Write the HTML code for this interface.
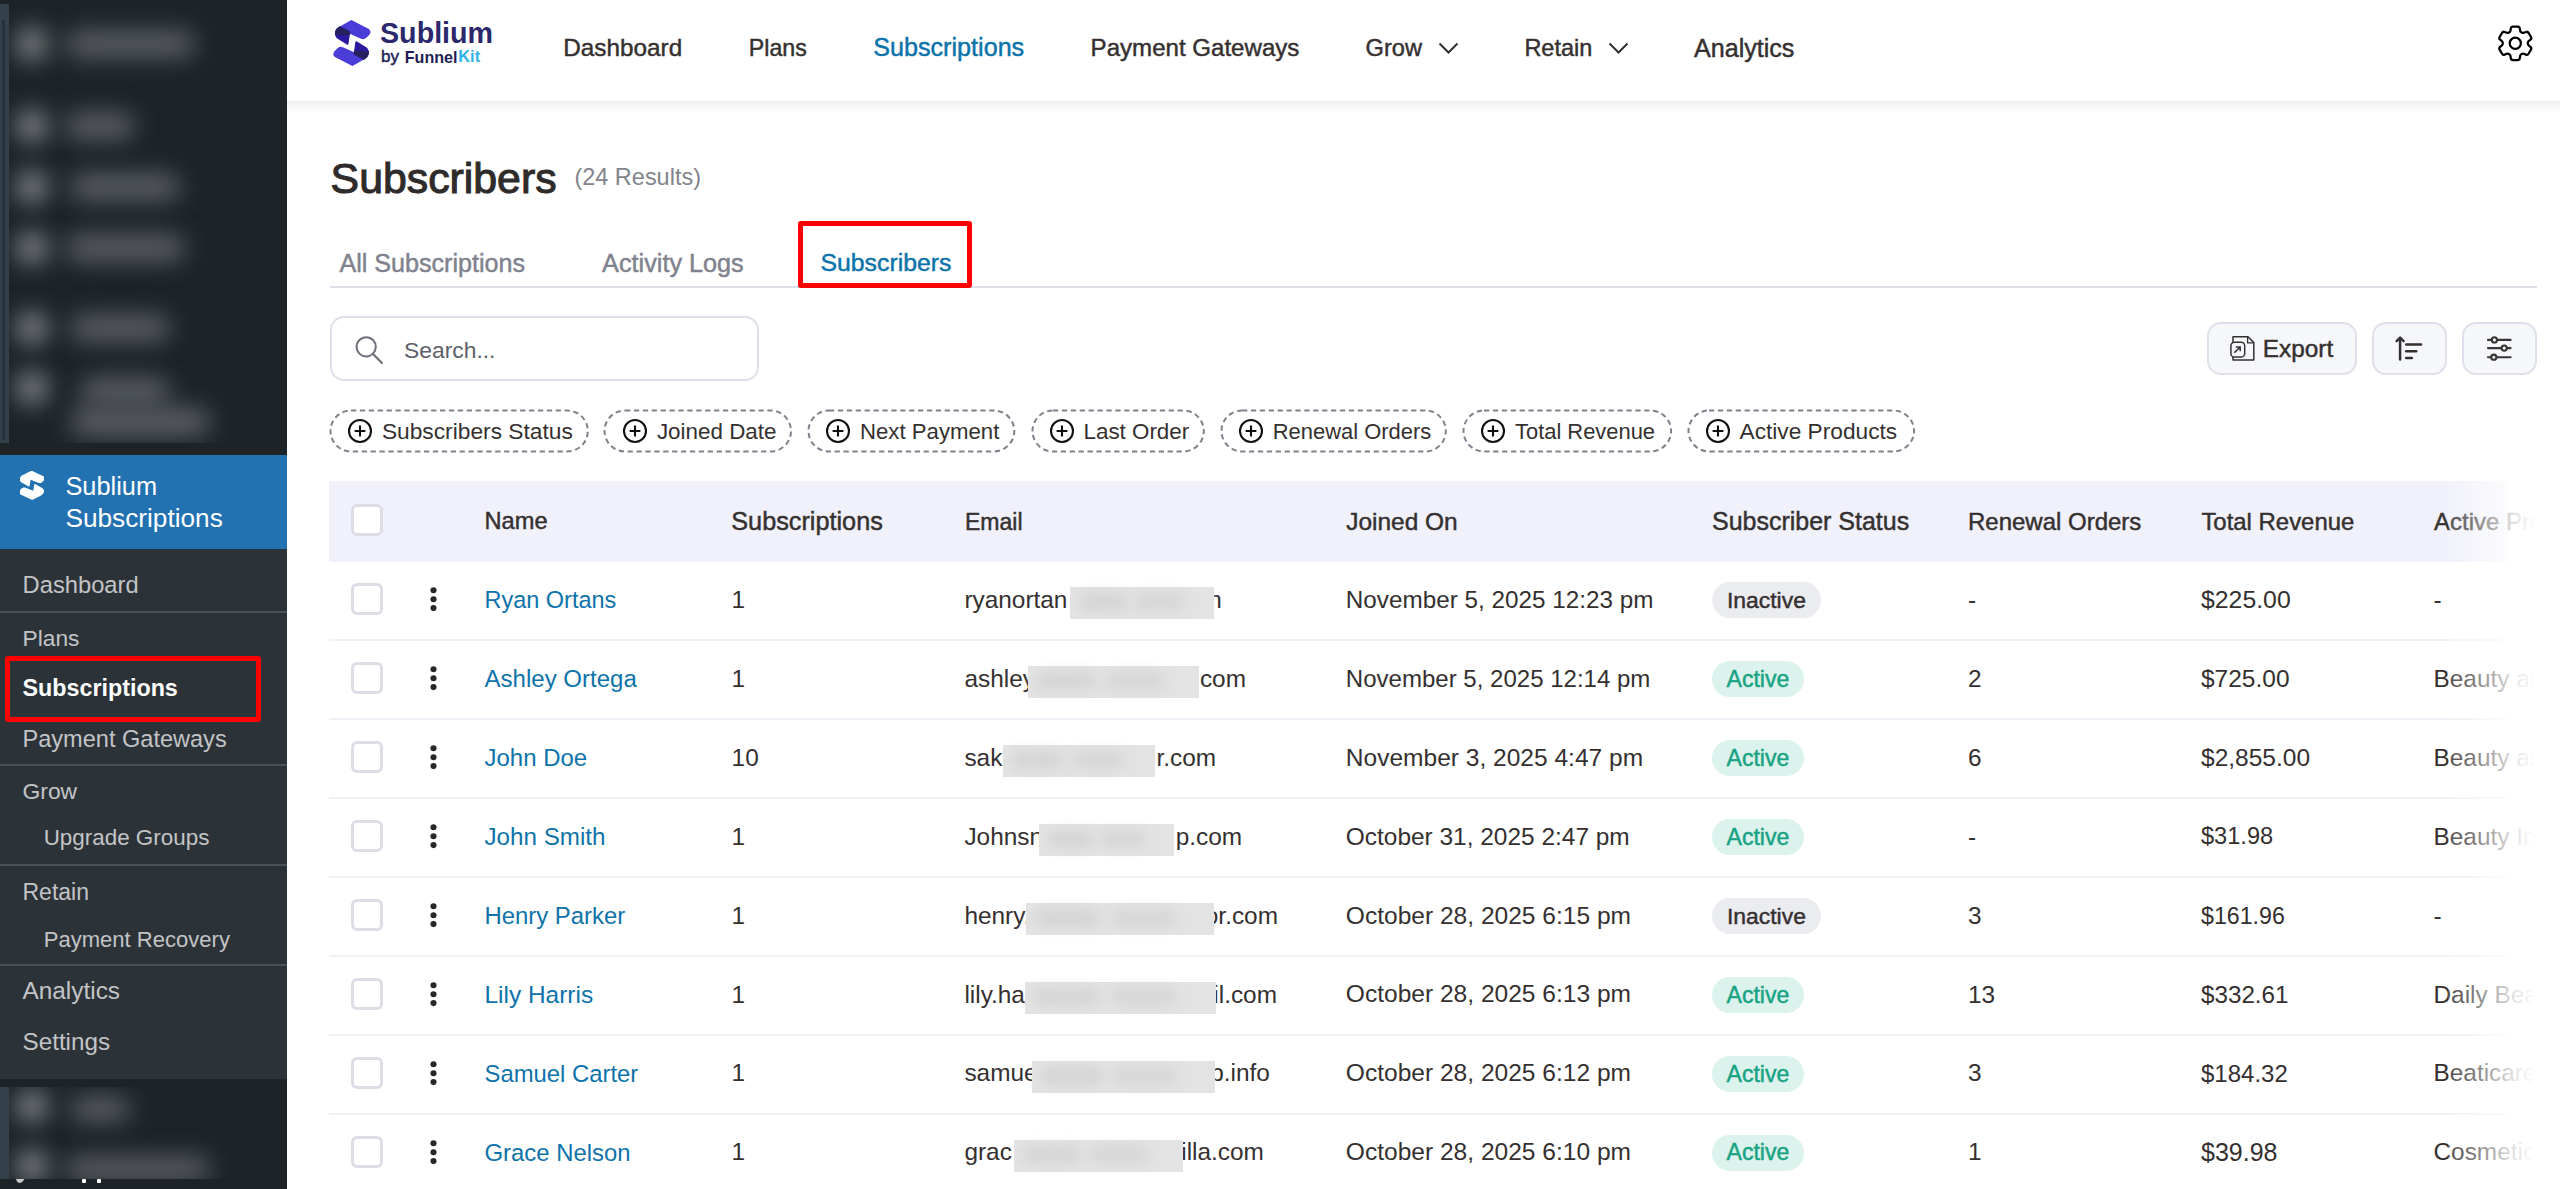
<!DOCTYPE html>
<html><head><meta charset="utf-8"><title>Subscribers</title>
<style>
html,body{margin:0;padding:0;width:2560px;height:1189px;overflow:hidden;background:#fff;}
body{position:relative;font-family:"Liberation Sans",sans-serif;}
.b{position:absolute;display:block;}
.t{position:absolute;white-space:nowrap;}
</style></head><body>
<div class="b" style="left:0px;top:0px;width:287px;height:1189px;background:#1d2327;"></div>
<div class="b" style="left:0;top:4px;width:287px;height:439px;overflow:hidden;">
<div class="b" style="left:16px;top:24px;width:32px;height:32px;background:#5d6166;filter:blur(12px);border-radius:20px;background:#84888c;"></div>
<div class="b" style="left:65px;top:27px;width:130px;height:26px;background:#5d6166;filter:blur(12px);border-radius:20px;"></div>
<div class="b" style="left:16px;top:106px;width:32px;height:32px;background:#5d6166;filter:blur(12px);border-radius:20px;background:#84888c;"></div>
<div class="b" style="left:65px;top:109px;width:70px;height:26px;background:#5d6166;filter:blur(12px);border-radius:20px;"></div>
<div class="b" style="left:16px;top:167px;width:32px;height:32px;background:#5d6166;filter:blur(12px);border-radius:20px;background:#84888c;"></div>
<div class="b" style="left:70px;top:170px;width:110px;height:26px;background:#5d6166;filter:blur(12px);border-radius:20px;"></div>
<div class="b" style="left:16px;top:228px;width:32px;height:32px;background:#5d6166;filter:blur(12px);border-radius:20px;background:#84888c;"></div>
<div class="b" style="left:65px;top:231px;width:120px;height:26px;background:#5d6166;filter:blur(12px);border-radius:20px;"></div>
<div class="b" style="left:16px;top:308px;width:32px;height:32px;background:#5d6166;filter:blur(12px);border-radius:20px;background:#84888c;"></div>
<div class="b" style="left:70px;top:311px;width:100px;height:26px;background:#5d6166;filter:blur(12px);border-radius:20px;"></div>
<div class="b" style="left:16px;top:368px;width:32px;height:32px;background:#5d6166;filter:blur(12px);border-radius:20px;background:#84888c;"></div>
<div class="b" style="left:80px;top:374px;width:90px;height:26px;background:#5d6166;filter:blur(12px);border-radius:20px;"></div>
<div class="b" style="left:70px;top:404px;width:140px;height:28px;background:#5d6166;filter:blur(12px);border-radius:20px;"></div>
<div class="b" style="left:0px;top:0px;width:9px;height:439px;background:#33414b;"></div>
<div class="b" style="left:2px;top:16px;width:3px;height:420px;background:#26313a;"></div>
</div>
<div class="b" style="left:0px;top:455px;width:287px;height:94px;background:#2271b1;"></div>
<div class="b" style="left:0px;top:549px;width:287px;height:530px;background:#2c3338;"></div>
<div class="b" style="left:0;top:1087px;width:287px;height:92px;overflow:hidden;">
<div class="b" style="left:16px;top:3px;width:32px;height:32px;background:#5d6166;filter:blur(12px);border-radius:20px;background:#84888c;"></div>
<div class="b" style="left:70px;top:10px;width:60px;height:24px;background:#5d6166;filter:blur(12px);border-radius:20px;"></div>
<div class="b" style="left:16px;top:63px;width:32px;height:32px;background:#5d6166;filter:blur(12px);border-radius:20px;background:#84888c;"></div>
<div class="b" style="left:65px;top:70px;width:145px;height:24px;background:#5d6166;filter:blur(12px);border-radius:20px;"></div>
<div class="b" style="left:0px;top:0px;width:9px;height:92px;background:#33414b;"></div>
</div>
<svg class="b" style="left:15px;top:1178px;width:10px;height:6px" viewBox="0 0 10 6"><path d="M1 1 Q2 5 5 5 Q8 4 9.5 1 Z" fill="#c8cacd"/></svg>
<div class="b" style="left:82px;top:1179px;width:3.5px;height:4px;background:#fff;border-radius:1px;"></div>
<div class="b" style="left:97px;top:1179px;width:3.5px;height:4px;background:#fff;border-radius:1px;"></div>
<div class="b" style="left:0px;top:611px;width:287px;height:2px;background:#4a5055;"></div>
<div class="b" style="left:0px;top:764px;width:287px;height:2px;background:#4a5055;"></div>
<div class="b" style="left:0px;top:864px;width:287px;height:2px;background:#4a5055;"></div>
<div class="b" style="left:0px;top:964px;width:287px;height:2px;background:#4a5055;"></div>
<svg class="b" style="left:19.8px;top:471px;width:24.6px;height:28.6px" viewBox="5 4.3 35 45.4" preserveAspectRatio="none">
<g fill="#fff" stroke="#fff" stroke-width="2.6" stroke-linejoin="round">
<path d="M10 11.6 L21.4 5.2 L38.4 14 Q40.2 15.6 38.6 18 L35.6 21 Q33.6 22.6 31.4 21.8 L19 16.3 L17.4 27.6 L7.4 21.2 Q5.4 19 6 16.2 Q7 13 10 11.6 Z"/>
<path d="M33.8 42.4 L22.4 48.8 L5.4 40 Q3.6 38.4 5.2 36 L8.2 33 Q10.2 31.4 12.4 32.2 L24.8 37.7 L26.4 26.4 L36.4 32.8 Q38.4 35 37.8 37.8 Q36.8 41 33.8 42.4 Z"/>
</g></svg>
<div class="t " style="left:65.40px;top:473.72px;font-size:25.37px;line-height:25.37px;color:#fff;">Sublium</div>
<div class="t " style="left:65.40px;top:504.91px;font-size:26.22px;line-height:26.22px;color:#fff;">Subscriptions</div>
<div class="t " style="left:22.60px;top:574.42px;font-size:23.72px;line-height:23.72px;color:#c3c4c7;">Dashboard</div>
<div class="t " style="left:22.50px;top:627.23px;font-size:22.76px;line-height:22.76px;color:#c3c4c7;">Plans</div>
<div class="t " style="left:22.50px;top:676.57px;font-size:23.31px;line-height:23.31px;color:#fff;font-weight:700;">Subscriptions</div>
<div class="t " style="left:22.50px;top:727.86px;font-size:23.55px;line-height:23.55px;color:#c3c4c7;">Payment Gateways</div>
<div class="t " style="left:22.50px;top:780.04px;font-size:22.87px;line-height:22.87px;color:#c3c4c7;">Grow</div>
<div class="t " style="left:43.70px;top:827.33px;font-size:22.41px;line-height:22.41px;color:#c3c4c7;">Upgrade Groups</div>
<div class="t " style="left:22.50px;top:880.62px;font-size:23.01px;line-height:23.01px;color:#c3c4c7;">Retain</div>
<div class="t " style="left:43.70px;top:929.14px;font-size:22.05px;line-height:22.05px;color:#c3c4c7;">Payment Recovery</div>
<div class="t " style="left:22.50px;top:979.37px;font-size:24.38px;line-height:24.38px;color:#c3c4c7;">Analytics</div>
<div class="t " style="left:22.50px;top:1029.78px;font-size:24.24px;line-height:24.24px;color:#c3c4c7;">Settings</div>
<div class="b" style="left:5px;top:656px;width:256px;height:66px;border:5px solid #ff0000;box-sizing:border-box;border-radius:3px;"></div>
<div class="b" style="left:287px;top:0px;width:2273px;height:101px;background:#fff;"></div>
<div class="b" style="left:287px;top:101px;width:2273px;height:12px;background:linear-gradient(#efeff0,#f6f7f8 50%,#fff);"></div>
<svg class="b" style="left:330px;top:16px;width:46px;height:54px" viewBox="0 0 46 54">
<g stroke-linejoin="round" stroke-width="2.2">
<path fill="#4a3dd8" stroke="#4a3dd8" d="M10 11.6 L21.4 5.2 L38.4 14 Q40.2 15.6 38.6 18 L35.6 21 Q33.6 22.6 31.4 21.8 L19 16.3 Z"/>
<path fill="#2a1b9e" stroke="#2a1b9e" d="M10 11.6 L19 16.3 L17.4 27.6 L7.4 21.2 Q5.4 19 6 16.2 Q7 13 10 11.6 Z"/>
<path fill="#26215e" stroke="#26215e" d="M7.2 14 Q8.4 12.4 10 11.6 L19 16.3 L18.6 18.2 L6.2 17.6 Q6.4 15.4 7.2 14 Z"/>
<path fill="#4a3dd8" stroke="#4a3dd8" d="M33.8 42.4 L22.4 48.8 L5.4 40 Q3.6 38.4 5.2 36 L8.2 33 Q10.2 31.4 12.4 32.2 L24.8 37.7 Z"/>
<path fill="#2a1b9e" stroke="#2a1b9e" d="M33.8 42.4 L24.8 37.7 L26.4 26.4 L36.4 32.8 Q38.4 35 37.8 37.8 Q36.8 41 33.8 42.4 Z"/>
<path fill="#26215e" stroke="#26215e" d="M36.6 40 Q35.4 41.6 33.8 42.4 L24.8 37.7 L25.2 35.8 L37.6 36.4 Q37.4 38.6 36.6 40 Z"/>
</g></svg>
<div class="t " style="left:380.00px;top:18.62px;font-size:28.68px;line-height:28.68px;color:#2b286c;font-weight:700;">Sublium</div>
<div class="t " style="left:381.00px;top:47.71px;font-size:17.00px;line-height:17.00px;color:#232158;-webkit-text-stroke:0.5px #232158;">by</div>
<div class="t " style="left:404.80px;top:48.50px;font-size:16.07px;line-height:16.07px;color:#1f1c55;font-weight:700;">Funnel</div>
<div class="t " style="left:458.30px;top:48.23px;font-size:16.39px;line-height:16.39px;color:#2fb4e6;font-weight:700;">Kit</div>
<div class="t " style="left:563.30px;top:36.17px;font-size:24.31px;line-height:24.31px;color:#353030;-webkit-text-stroke:0.45px #353030;">Dashboard</div>
<div class="t " style="left:748.80px;top:37.11px;font-size:23.20px;line-height:23.20px;color:#353030;-webkit-text-stroke:0.45px #353030;">Plans</div>
<div class="t " style="left:873.20px;top:35.45px;font-size:25.17px;line-height:25.17px;color:#0b73aa;-webkit-text-stroke:0.45px #0b73aa;">Subscriptions</div>
<div class="t " style="left:1090.60px;top:36.35px;font-size:24.09px;line-height:24.09px;color:#353030;-webkit-text-stroke:0.45px #353030;">Payment Gateways</div>
<div class="t " style="left:1365.60px;top:36.79px;font-size:23.58px;line-height:23.58px;color:#353030;-webkit-text-stroke:0.45px #353030;">Grow</div>
<div class="t " style="left:1524.40px;top:36.86px;font-size:23.49px;line-height:23.49px;color:#353030;-webkit-text-stroke:0.45px #353030;">Retain</div>
<div class="t " style="left:1694.00px;top:35.50px;font-size:25.10px;line-height:25.10px;color:#353030;-webkit-text-stroke:0.45px #353030;">Analytics</div>
<svg class="b" style="left:1437.6px;top:42px;width:21px;height:13px" viewBox="0 0 21 13"><path d="M1.5 1.5 L10.5 10.5 L19.5 1.5" fill="none" stroke="#353030" stroke-width="2"/></svg>
<svg class="b" style="left:1607.75px;top:42px;width:21px;height:13px" viewBox="0 0 21 13"><path d="M1.5 1.5 L10.5 10.5 L19.5 1.5" fill="none" stroke="#353030" stroke-width="2"/></svg>
<svg class="b" style="left:2493.1px;top:20.7px;width:44.6px;height:44.6px" viewBox="0 0 24 24" fill="none" stroke="#000" stroke-width="1.2" stroke-linecap="round" stroke-linejoin="round">
<path d="M9.594 3.94c.09-.542.56-.94 1.11-.94h2.593c.55 0 1.02.398 1.11.94l.213 1.281c.063.374.313.686.645.87.074.04.147.083.22.127.325.196.72.257 1.075.124l1.217-.456a1.125 1.125 0 0 1 1.37.49l1.296 2.247a1.125 1.125 0 0 1-.26 1.431l-1.003.827c-.293.241-.438.613-.43.992a7.723 7.723 0 0 1 0 .255c-.008.378.137.75.43.991l1.004.827c.424.35.534.955.26 1.43l-1.298 2.247a1.125 1.125 0 0 1-1.369.491l-1.217-.456c-.355-.133-.75-.072-1.076.124a6.47 6.470 0 0 1-.22.128c-.331.183-.581.495-.644.869l-.213 1.281c-.09.543-.56.94-1.110.94h-2.594c-.55 0-1.019-.398-1.110-.94l-.213-1.281c-.062-.374-.312-.686-.644-.87a6.52 6.52 0 0 1-.22-.127c-.325-.196-.72-.257-1.076-.124l-1.217.456a1.125 1.125 0 0 1-1.369-.49l-1.297-2.247a1.125 1.125 0 0 1 .26-1.431l1.004-.827c.292-.24.437-.613.43-.991a6.932 6.932 0 0 1 0-.255c.007-.38-.138-.751-.43-.992l-1.004-.827a1.125 1.125 0 0 1-.26-1.43l1.297-2.247a1.125 1.125 0 0 1 1.370-.491l1.216.456c.356.133.751.072 1.076-.124.072-.044.146-.086.22-.128.332-.183.582-.495.644-.869l.214-1.28Z"/>
<circle cx="12" cy="12" r="3"/>
</svg>
<div class="t " style="left:330.60px;top:157.27px;font-size:42.80px;line-height:42.80px;color:#2f2b2b;-webkit-text-stroke:1.1px #2f2b2b;">Subscribers</div>
<div class="t " style="left:574.40px;top:166.22px;font-size:23.49px;line-height:23.49px;color:#82848c;">(24 Results)</div>
<div class="b" style="left:330px;top:286px;width:2207px;height:2px;background:#dfe1ea;"></div>
<div class="t " style="left:339.40px;top:250.72px;font-size:25.14px;line-height:25.14px;color:#80828d;-webkit-text-stroke:0.45px #80828d;">All Subscriptions</div>
<div class="t " style="left:602.10px;top:250.63px;font-size:25.24px;line-height:25.24px;color:#80828d;-webkit-text-stroke:0.45px #80828d;">Activity Logs</div>
<div class="t " style="left:820.40px;top:250.88px;font-size:24.83px;line-height:24.83px;color:#0b73aa;-webkit-text-stroke:0.45px #0b73aa;">Subscribers</div>
<div class="b" style="left:798px;top:221px;width:174px;height:67px;border:5px solid #ff0000;box-sizing:border-box;border-radius:3px;"></div>
<div class="b" style="left:330px;top:316px;width:429px;height:65px;border:2px solid #dfe0eb;box-sizing:border-box;border-radius:14px;background:#fff;"></div>
<svg class="b" style="left:350px;top:330px;width:40px;height:40px" viewBox="0 0 40 40">
<circle cx="16.2" cy="16.8" r="9.6" fill="none" stroke="#6e7179" stroke-width="2"/>
<path d="M23 24 L32 33" stroke="#6e7179" stroke-width="2.2" stroke-linecap="round"/>
</svg>
<div class="t " style="left:404.00px;top:338.86px;font-size:22.85px;line-height:22.85px;color:#5d6068;">Search...</div>
<div class="b" style="left:2207px;top:322px;width:150px;height:53px;border:2px solid #dfe0eb;box-sizing:border-box;border-radius:14px;background:#f6f7fa;"></div>
<div class="b" style="left:2372px;top:322px;width:75px;height:53px;border:2px solid #dfe0eb;box-sizing:border-box;border-radius:14px;background:#f6f7fa;"></div>
<div class="b" style="left:2462px;top:322px;width:75px;height:53px;border:2px solid #dfe0eb;box-sizing:border-box;border-radius:14px;background:#f6f7fa;"></div>
<svg class="b" style="left:2228px;top:335px;width:28px;height:28px" viewBox="0 0 28 28">
<path d="M5 7 V1.8 H20 L25.8 7.6 V25.1 H5 V22" fill="none" stroke="#353030" stroke-width="1.5" stroke-linejoin="round"/>
<path d="M19.6 1.8 V7.9 H25.8" fill="none" stroke="#353030" stroke-width="1.3"/>
<rect x="2.9" y="7.3" width="13.8" height="14.8" rx="3.6" fill="#f6f7fa" stroke="#353030" stroke-width="1.5"/>
<path d="M6.4 17.6 L12 12.2 M7.8 12 H12.2 V16.2" fill="none" stroke="#353030" stroke-width="1.5"/>
</svg>
<div class="t " style="left:2262.80px;top:336.95px;font-size:24.39px;line-height:24.39px;color:#353030;-webkit-text-stroke:0.45px #353030;">Export</div>
<svg class="b" style="left:2392px;top:332px;width:36px;height:32px" viewBox="0 0 36 32">
<g stroke="#353030" stroke-width="2.5" stroke-linecap="round" stroke-linejoin="round" fill="none">
<path d="M8.1 6.4 V27.5"/>
<path d="M4.6 9.2 L8.1 5.6 L11.6 9.2"/>
<path d="M14.2 12.4 H29"/>
<path d="M14.2 19.3 H24.2"/>
<path d="M14.2 26 H19.8"/>
</g></svg>
<svg class="b" style="left:2482px;top:330px;width:36px;height:36px" viewBox="0 0 36 36">
<g stroke="#3a3535" stroke-width="2.1" fill="none" stroke-linecap="round">
<path d="M6 9.9 H9.2 M15.6 9.9 H28.6"/><circle cx="12.4" cy="9.9" r="2.6"/>
<path d="M6 18.1 H19 M25.4 18.1 H28.6"/><circle cx="22.2" cy="18.1" r="2.6"/>
<path d="M6 27.2 H8.6 M15 27.2 H28.6"/><circle cx="11.8" cy="27.2" r="2.6"/>
</g></svg>
<svg class="b" style="left:329.2px;top:409px;width:260.3px;height:44px" viewBox="0 0 260.3 44"><rect x="1.5" y="1.5" width="257.3" height="41" rx="20.5" fill="none" stroke="#7f828c" stroke-width="2" stroke-dasharray="5.3 3.6"/></svg>
<svg class="b" style="left:346.9px;top:418px;width:26px;height:26px" viewBox="0 0 26 26"><circle cx="13" cy="13" r="11" fill="none" stroke="#111" stroke-width="2.1"/><path d="M13 7.6 V18.4 M7.6 13 H18.4" stroke="#111" stroke-width="2.1"/></svg>
<div class="t " style="left:381.90px;top:420.24px;font-size:22.75px;line-height:22.75px;color:#353030;">Subscribers Status</div>
<svg class="b" style="left:603.2px;top:409px;width:189.5px;height:44px" viewBox="0 0 189.5 44"><rect x="1.5" y="1.5" width="186.5" height="41" rx="20.5" fill="none" stroke="#7f828c" stroke-width="2" stroke-dasharray="5.3 3.6"/></svg>
<svg class="b" style="left:621.9px;top:418px;width:26px;height:26px" viewBox="0 0 26 26"><circle cx="13" cy="13" r="11" fill="none" stroke="#111" stroke-width="2.1"/><path d="M13 7.6 V18.4 M7.6 13 H18.4" stroke="#111" stroke-width="2.1"/></svg>
<div class="t " style="left:656.90px;top:420.53px;font-size:22.42px;line-height:22.42px;color:#353030;">Joined Date</div>
<svg class="b" style="left:807.3px;top:409px;width:208.8px;height:44px" viewBox="0 0 208.8 44"><rect x="1.5" y="1.5" width="205.8" height="41" rx="20.5" fill="none" stroke="#7f828c" stroke-width="2" stroke-dasharray="5.3 3.6"/></svg>
<svg class="b" style="left:825.0px;top:418px;width:26px;height:26px" viewBox="0 0 26 26"><circle cx="13" cy="13" r="11" fill="none" stroke="#111" stroke-width="2.1"/><path d="M13 7.6 V18.4 M7.6 13 H18.4" stroke="#111" stroke-width="2.1"/></svg>
<div class="t " style="left:860.00px;top:420.71px;font-size:22.20px;line-height:22.20px;color:#353030;">Next Payment</div>
<svg class="b" style="left:1031.0px;top:409px;width:174.3px;height:44px" viewBox="0 0 174.3 44"><rect x="1.5" y="1.5" width="171.3" height="41" rx="20.5" fill="none" stroke="#7f828c" stroke-width="2" stroke-dasharray="5.3 3.6"/></svg>
<svg class="b" style="left:1048.5px;top:418px;width:26px;height:26px" viewBox="0 0 26 26"><circle cx="13" cy="13" r="11" fill="none" stroke="#111" stroke-width="2.1"/><path d="M13 7.6 V18.4 M7.6 13 H18.4" stroke="#111" stroke-width="2.1"/></svg>
<div class="t " style="left:1083.50px;top:420.54px;font-size:22.39px;line-height:22.39px;color:#353030;">Last Order</div>
<svg class="b" style="left:1220.3px;top:409px;width:227.3px;height:44px" viewBox="0 0 227.3 44"><rect x="1.5" y="1.5" width="224.3" height="41" rx="20.5" fill="none" stroke="#7f828c" stroke-width="2" stroke-dasharray="5.3 3.6"/></svg>
<svg class="b" style="left:1237.7px;top:418px;width:26px;height:26px" viewBox="0 0 26 26"><circle cx="13" cy="13" r="11" fill="none" stroke="#111" stroke-width="2.1"/><path d="M13 7.6 V18.4 M7.6 13 H18.4" stroke="#111" stroke-width="2.1"/></svg>
<div class="t " style="left:1272.70px;top:420.92px;font-size:21.95px;line-height:21.95px;color:#353030;">Renewal Orders</div>
<svg class="b" style="left:1461.5px;top:409px;width:210.6px;height:44px" viewBox="0 0 210.6 44"><rect x="1.5" y="1.5" width="207.6" height="41" rx="20.5" fill="none" stroke="#7f828c" stroke-width="2" stroke-dasharray="5.3 3.6"/></svg>
<svg class="b" style="left:1480.0px;top:418px;width:26px;height:26px" viewBox="0 0 26 26"><circle cx="13" cy="13" r="11" fill="none" stroke="#111" stroke-width="2.1"/><path d="M13 7.6 V18.4 M7.6 13 H18.4" stroke="#111" stroke-width="2.1"/></svg>
<div class="t " style="left:1515.00px;top:420.95px;font-size:21.91px;line-height:21.91px;color:#353030;">Total Revenue</div>
<svg class="b" style="left:1686.7px;top:409px;width:228.5px;height:44px" viewBox="0 0 228.5 44"><rect x="1.5" y="1.5" width="225.5" height="41" rx="20.5" fill="none" stroke="#7f828c" stroke-width="2" stroke-dasharray="5.3 3.6"/></svg>
<svg class="b" style="left:1704.5px;top:418px;width:26px;height:26px" viewBox="0 0 26 26"><circle cx="13" cy="13" r="11" fill="none" stroke="#111" stroke-width="2.1"/><path d="M13 7.6 V18.4 M7.6 13 H18.4" stroke="#111" stroke-width="2.1"/></svg>
<div class="t " style="left:1739.50px;top:420.29px;font-size:22.69px;line-height:22.69px;color:#353030;">Active Products</div>
<div class="b" style="left:329px;top:481px;width:2179px;height:81px;background:#f0f1fa;"></div>
<div class="b" style="left:351px;top:504px;width:32px;height:32px;border:3px solid #dcdde6;box-sizing:border-box;border-radius:6px;background:#fff;"></div>
<div class="t " style="left:484.50px;top:510.39px;font-size:23.63px;line-height:23.63px;color:#353030;-webkit-text-stroke:0.45px #353030;">Name</div>
<div class="t " style="left:731.25px;top:509.03px;font-size:25.25px;line-height:25.25px;color:#353030;-webkit-text-stroke:0.45px #353030;">Subscriptions</div>
<div class="t " style="left:965.00px;top:510.93px;font-size:23.00px;line-height:23.00px;color:#353030;-webkit-text-stroke:0.45px #353030;">Email</div>
<div class="t " style="left:1346.25px;top:509.70px;font-size:24.45px;line-height:24.45px;color:#353030;-webkit-text-stroke:0.45px #353030;">Joined On</div>
<div class="t " style="left:1712.00px;top:509.24px;font-size:24.99px;line-height:24.99px;color:#353030;-webkit-text-stroke:0.45px #353030;">Subscriber Status</div>
<div class="t " style="left:1968.00px;top:510.09px;font-size:23.99px;line-height:23.99px;color:#353030;-webkit-text-stroke:0.45px #353030;">Renewal Orders</div>
<div class="t " style="left:2201.40px;top:510.14px;font-size:23.93px;line-height:23.93px;color:#353030;-webkit-text-stroke:0.45px #353030;">Total Revenue</div>
<div class="t " style="left:2434.00px;top:510.08px;font-size:24.00px;line-height:24.00px;color:#353030;-webkit-text-stroke:0.45px #353030;">Active Products</div>
<div class="b" style="left:329px;top:639px;width:2179px;height:2px;background:#f0f1f7;"></div>
<div class="b" style="left:351px;top:583px;width:32px;height:32px;border:3px solid #dcdde6;box-sizing:border-box;border-radius:6px;background:#fff;"></div>
<svg class="b" style="left:426px;top:584.20px;width:16px;height:30px" viewBox="0 0 16 30"><g fill="#2a2626"><circle cx="7.5" cy="6.2" r="3.05"/><circle cx="7.5" cy="15.2" r="3.05"/><circle cx="7.5" cy="24.1" r="3.05"/></g></svg>
<div class="t " style="left:484.50px;top:588.81px;font-size:23.49px;line-height:23.49px;color:#0e73aa;">Ryan Ortans</div>
<div class="t " style="left:731.60px;top:588.05px;font-size:24.40px;line-height:24.40px;color:#353030;">1</div>
<div class="t " style="left:964.40px;top:588.05px;font-size:24.40px;line-height:24.40px;color:#353030;">ryanortan</div>
<div class="t " style="left:1208.34px;top:588.05px;font-size:24.40px;line-height:24.40px;color:#353030;">n</div>
<div class="b" style="left:1069.8px;top:587px;width:144.60000000000014px;height:32px;background:#e3e3e3;"></div>
<div class="b" style="left:1077.8px;top:593px;width:50.61000000000004px;height:18px;background:#d5d5d5;filter:blur(6px);border-radius:9px;"></div>
<div class="b" style="left:1134.8700000000001px;top:593px;width:50.61000000000004px;height:18px;background:#d7d7d7;filter:blur(6px);border-radius:9px;"></div>
<div class="t " style="left:1345.80px;top:588.16px;font-size:24.27px;line-height:24.27px;color:#353030;">November 5, 2025 12:23 pm</div>
<div class="b" style="left:1712px;top:582px;width:109px;height:36px;background:#ebecf0;border-radius:18px;"></div>
<div class="t " style="left:1726.90px;top:589.29px;font-size:22.93px;line-height:22.93px;color:#353030;-webkit-text-stroke:0.45px #353030;">Inactive</div>
<div class="t " style="left:1968.00px;top:588.05px;font-size:24.40px;line-height:24.40px;color:#353030;">-</div>
<div class="t " style="left:2201.00px;top:587.69px;font-size:24.82px;line-height:24.82px;color:#353030;">$225.00</div>
<div class="t " style="left:2433.50px;top:588.05px;font-size:24.40px;line-height:24.40px;color:#353030;">-</div>
<div class="b" style="left:329px;top:718px;width:2179px;height:2px;background:#f0f1f7;"></div>
<div class="b" style="left:351px;top:662px;width:32px;height:32px;border:3px solid #dcdde6;box-sizing:border-box;border-radius:6px;background:#fff;"></div>
<svg class="b" style="left:426px;top:663.10px;width:16px;height:30px" viewBox="0 0 16 30"><g fill="#2a2626"><circle cx="7.5" cy="6.2" r="3.05"/><circle cx="7.5" cy="15.2" r="3.05"/><circle cx="7.5" cy="24.1" r="3.05"/></g></svg>
<div class="t " style="left:484.50px;top:667.24px;font-size:24.05px;line-height:24.05px;color:#0e73aa;">Ashley Ortega</div>
<div class="t " style="left:731.60px;top:666.95px;font-size:24.40px;line-height:24.40px;color:#353030;">1</div>
<div class="t " style="left:964.40px;top:666.95px;font-size:24.40px;line-height:24.40px;color:#353030;">ashley</div>
<div class="t " style="left:1199.88px;top:666.95px;font-size:24.40px;line-height:24.40px;color:#353030;">com</div>
<div class="b" style="left:1028.3px;top:666px;width:170.29999999999995px;height:32px;background:#e3e3e3;"></div>
<div class="b" style="left:1036.3px;top:672px;width:59.60499999999998px;height:18px;background:#d5d5d5;filter:blur(6px);border-radius:9px;"></div>
<div class="b" style="left:1104.935px;top:672px;width:59.60499999999998px;height:18px;background:#d7d7d7;filter:blur(6px);border-radius:9px;"></div>
<div class="t " style="left:1345.80px;top:667.25px;font-size:24.04px;line-height:24.04px;color:#353030;">November 5, 2025 12:14 pm</div>
<div class="b" style="left:1712px;top:661px;width:92px;height:36px;background:#dcf2ec;border-radius:18px;"></div>
<div class="t " style="left:1726.50px;top:668.06px;font-size:23.09px;line-height:23.09px;color:#17a384;-webkit-text-stroke:0.45px #17a384;">Active</div>
<div class="t " style="left:1968.00px;top:666.95px;font-size:24.40px;line-height:24.40px;color:#353030;">2</div>
<div class="t " style="left:2201.00px;top:666.87px;font-size:24.49px;line-height:24.49px;color:#353030;">$725.00</div>
<div class="t " style="left:2433.50px;top:666.95px;font-size:24.40px;line-height:24.40px;color:#353030;">Beauty and Wellness</div>
<div class="b" style="left:329px;top:797px;width:2179px;height:2px;background:#f0f1f7;"></div>
<div class="b" style="left:351px;top:741px;width:32px;height:32px;border:3px solid #dcdde6;box-sizing:border-box;border-radius:6px;background:#fff;"></div>
<svg class="b" style="left:426px;top:742.00px;width:16px;height:30px" viewBox="0 0 16 30"><g fill="#2a2626"><circle cx="7.5" cy="6.2" r="3.05"/><circle cx="7.5" cy="15.2" r="3.05"/><circle cx="7.5" cy="24.1" r="3.05"/></g></svg>
<div class="t " style="left:484.50px;top:746.21px;font-size:23.97px;line-height:23.97px;color:#0e73aa;">John Doe</div>
<div class="t " style="left:731.60px;top:745.85px;font-size:24.40px;line-height:24.40px;color:#353030;">10</div>
<div class="t " style="left:964.40px;top:745.85px;font-size:24.40px;line-height:24.40px;color:#353030;">sak</div>
<div class="t " style="left:1156.46px;top:745.85px;font-size:24.40px;line-height:24.40px;color:#353030;">r.com</div>
<div class="b" style="left:1003.2px;top:745px;width:151.89999999999986px;height:32px;background:#e3e3e3;"></div>
<div class="b" style="left:1011.2px;top:751px;width:53.16499999999995px;height:18px;background:#d5d5d5;filter:blur(6px);border-radius:9px;"></div>
<div class="b" style="left:1071.555px;top:751px;width:53.16499999999995px;height:18px;background:#d7d7d7;filter:blur(6px);border-radius:9px;"></div>
<div class="t " style="left:1345.80px;top:745.73px;font-size:24.54px;line-height:24.54px;color:#353030;">November 3, 2025 4:47 pm</div>
<div class="b" style="left:1712px;top:740px;width:92px;height:36px;background:#dcf2ec;border-radius:18px;"></div>
<div class="t " style="left:1726.50px;top:746.96px;font-size:23.09px;line-height:23.09px;color:#17a384;-webkit-text-stroke:0.45px #17a384;">Active</div>
<div class="t " style="left:1968.00px;top:745.85px;font-size:24.40px;line-height:24.40px;color:#353030;">6</div>
<div class="t " style="left:2201.00px;top:745.75px;font-size:24.52px;line-height:24.52px;color:#353030;">$2,855.00</div>
<div class="t " style="left:2433.50px;top:745.85px;font-size:24.40px;line-height:24.40px;color:#353030;">Beauty and Care</div>
<div class="b" style="left:329px;top:876px;width:2179px;height:2px;background:#f0f1f7;"></div>
<div class="b" style="left:351px;top:820px;width:32px;height:32px;border:3px solid #dcdde6;box-sizing:border-box;border-radius:6px;background:#fff;"></div>
<svg class="b" style="left:426px;top:820.90px;width:16px;height:30px" viewBox="0 0 16 30"><g fill="#2a2626"><circle cx="7.5" cy="6.2" r="3.05"/><circle cx="7.5" cy="15.2" r="3.05"/><circle cx="7.5" cy="24.1" r="3.05"/></g></svg>
<div class="t " style="left:484.50px;top:824.91px;font-size:24.20px;line-height:24.20px;color:#0e73aa;">John Smith</div>
<div class="t " style="left:731.60px;top:824.75px;font-size:24.40px;line-height:24.40px;color:#353030;">1</div>
<div class="t " style="left:964.40px;top:824.75px;font-size:24.40px;line-height:24.40px;color:#353030;">Johnsn</div>
<div class="t " style="left:1175.63px;top:824.75px;font-size:24.40px;line-height:24.40px;color:#353030;">p.com</div>
<div class="b" style="left:1038.7px;top:824px;width:135.29999999999995px;height:32px;background:#e3e3e3;"></div>
<div class="b" style="left:1046.7px;top:830px;width:47.35499999999998px;height:18px;background:#d5d5d5;filter:blur(6px);border-radius:9px;"></div>
<div class="b" style="left:1099.585px;top:830px;width:47.35499999999998px;height:18px;background:#d7d7d7;filter:blur(6px);border-radius:9px;"></div>
<div class="t " style="left:1345.80px;top:824.71px;font-size:24.44px;line-height:24.44px;color:#353030;">October 31, 2025 2:47 pm</div>
<div class="b" style="left:1712px;top:819px;width:92px;height:36px;background:#dcf2ec;border-radius:18px;"></div>
<div class="t " style="left:1726.50px;top:825.86px;font-size:23.09px;line-height:23.09px;color:#17a384;-webkit-text-stroke:0.45px #17a384;">Active</div>
<div class="t " style="left:1968.00px;top:824.75px;font-size:24.40px;line-height:24.40px;color:#353030;">-</div>
<div class="t " style="left:2201.00px;top:825.43px;font-size:23.59px;line-height:23.59px;color:#353030;">$31.98</div>
<div class="t " style="left:2433.50px;top:824.75px;font-size:24.40px;line-height:24.40px;color:#353030;">Beauty Intense</div>
<div class="b" style="left:329px;top:955px;width:2179px;height:2px;background:#f0f1f7;"></div>
<div class="b" style="left:351px;top:899px;width:32px;height:32px;border:3px solid #dcdde6;box-sizing:border-box;border-radius:6px;background:#fff;"></div>
<svg class="b" style="left:426px;top:899.80px;width:16px;height:30px" viewBox="0 0 16 30"><g fill="#2a2626"><circle cx="7.5" cy="6.2" r="3.05"/><circle cx="7.5" cy="15.2" r="3.05"/><circle cx="7.5" cy="24.1" r="3.05"/></g></svg>
<div class="t " style="left:484.50px;top:904.06px;font-size:23.90px;line-height:23.90px;color:#0e73aa;">Henry Parker</div>
<div class="t " style="left:731.60px;top:903.65px;font-size:24.40px;line-height:24.40px;color:#353030;">1</div>
<div class="t " style="left:964.40px;top:903.65px;font-size:24.40px;line-height:24.40px;color:#353030;">henry.</div>
<div class="t " style="left:1204.80px;top:903.65px;font-size:24.40px;line-height:24.40px;color:#353030;">or.com</div>
<div class="b" style="left:1026.1px;top:903px;width:188.20000000000005px;height:32px;background:#e3e3e3;"></div>
<div class="b" style="left:1034.1px;top:909px;width:65.87000000000002px;height:18px;background:#d5d5d5;filter:blur(6px);border-radius:9px;"></div>
<div class="b" style="left:1110.79px;top:909px;width:65.87000000000002px;height:18px;background:#d7d7d7;filter:blur(6px);border-radius:9px;"></div>
<div class="t " style="left:1345.80px;top:903.51px;font-size:24.56px;line-height:24.56px;color:#353030;">October 28, 2025 6:15 pm</div>
<div class="b" style="left:1712px;top:898px;width:109px;height:36px;background:#ebecf0;border-radius:18px;"></div>
<div class="t " style="left:1726.90px;top:904.89px;font-size:22.93px;line-height:22.93px;color:#353030;-webkit-text-stroke:0.45px #353030;">Inactive</div>
<div class="t " style="left:1968.00px;top:903.65px;font-size:24.40px;line-height:24.40px;color:#353030;">3</div>
<div class="t " style="left:2201.00px;top:904.65px;font-size:23.21px;line-height:23.21px;color:#353030;">$161.96</div>
<div class="t " style="left:2433.50px;top:903.65px;font-size:24.40px;line-height:24.40px;color:#353030;">-</div>
<div class="b" style="left:329px;top:1034px;width:2179px;height:2px;background:#f0f1f7;"></div>
<div class="b" style="left:351px;top:978px;width:32px;height:32px;border:3px solid #dcdde6;box-sizing:border-box;border-radius:6px;background:#fff;"></div>
<svg class="b" style="left:426px;top:978.70px;width:16px;height:30px" viewBox="0 0 16 30"><g fill="#2a2626"><circle cx="7.5" cy="6.2" r="3.05"/><circle cx="7.5" cy="15.2" r="3.05"/><circle cx="7.5" cy="24.1" r="3.05"/></g></svg>
<div class="t " style="left:484.50px;top:982.51px;font-size:24.44px;line-height:24.44px;color:#0e73aa;">Lily Harris</div>
<div class="t " style="left:731.60px;top:982.55px;font-size:24.40px;line-height:24.40px;color:#353030;">1</div>
<div class="t " style="left:964.40px;top:982.55px;font-size:24.40px;line-height:24.40px;color:#353030;">lily.ha</div>
<div class="t " style="left:1213.32px;top:982.55px;font-size:24.40px;line-height:24.40px;color:#353030;">il.com</div>
<div class="b" style="left:1025px;top:982px;width:191.29999999999995px;height:32px;background:#e3e3e3;"></div>
<div class="b" style="left:1033px;top:988px;width:66.95499999999998px;height:18px;background:#d5d5d5;filter:blur(6px);border-radius:9px;"></div>
<div class="b" style="left:1111.085px;top:988px;width:66.95499999999998px;height:18px;background:#d7d7d7;filter:blur(6px);border-radius:9px;"></div>
<div class="t " style="left:1345.80px;top:982.41px;font-size:24.56px;line-height:24.56px;color:#353030;">October 28, 2025 6:13 pm</div>
<div class="b" style="left:1712px;top:977px;width:92px;height:36px;background:#dcf2ec;border-radius:18px;"></div>
<div class="t " style="left:1726.50px;top:983.66px;font-size:23.09px;line-height:23.09px;color:#17a384;-webkit-text-stroke:0.45px #17a384;">Active</div>
<div class="t " style="left:1968.00px;top:982.55px;font-size:24.40px;line-height:24.40px;color:#353030;">13</div>
<div class="t " style="left:2201.00px;top:982.71px;font-size:24.21px;line-height:24.21px;color:#353030;">$332.61</div>
<div class="t " style="left:2433.50px;top:982.55px;font-size:24.40px;line-height:24.40px;color:#353030;">Daily Beauty</div>
<div class="b" style="left:329px;top:1113px;width:2179px;height:2px;background:#f0f1f7;"></div>
<div class="b" style="left:351px;top:1057px;width:32px;height:32px;border:3px solid #dcdde6;box-sizing:border-box;border-radius:6px;background:#fff;"></div>
<svg class="b" style="left:426px;top:1057.60px;width:16px;height:30px" viewBox="0 0 16 30"><g fill="#2a2626"><circle cx="7.5" cy="6.2" r="3.05"/><circle cx="7.5" cy="15.2" r="3.05"/><circle cx="7.5" cy="24.1" r="3.05"/></g></svg>
<div class="t " style="left:484.50px;top:1061.90px;font-size:23.86px;line-height:23.86px;color:#0e73aa;">Samuel Carter</div>
<div class="t " style="left:731.60px;top:1061.45px;font-size:24.40px;line-height:24.40px;color:#353030;">1</div>
<div class="t " style="left:964.40px;top:1061.45px;font-size:24.40px;line-height:24.40px;color:#353030;">samue</div>
<div class="t " style="left:1210.22px;top:1061.45px;font-size:24.40px;line-height:24.40px;color:#353030;">b.info</div>
<div class="b" style="left:1032px;top:1061px;width:182.70000000000005px;height:32px;background:#e3e3e3;"></div>
<div class="b" style="left:1040px;top:1067px;width:63.945000000000014px;height:18px;background:#d5d5d5;filter:blur(6px);border-radius:9px;"></div>
<div class="b" style="left:1114.215px;top:1067px;width:63.945000000000014px;height:18px;background:#d7d7d7;filter:blur(6px);border-radius:9px;"></div>
<div class="t " style="left:1345.80px;top:1061.31px;font-size:24.56px;line-height:24.56px;color:#353030;">October 28, 2025 6:12 pm</div>
<div class="b" style="left:1712px;top:1056px;width:92px;height:36px;background:#dcf2ec;border-radius:18px;"></div>
<div class="t " style="left:1726.50px;top:1062.56px;font-size:23.09px;line-height:23.09px;color:#17a384;-webkit-text-stroke:0.45px #17a384;">Active</div>
<div class="t " style="left:1968.00px;top:1061.45px;font-size:24.40px;line-height:24.40px;color:#353030;">3</div>
<div class="t " style="left:2201.00px;top:1061.77px;font-size:24.02px;line-height:24.02px;color:#353030;">$184.32</div>
<div class="t " style="left:2433.50px;top:1061.45px;font-size:24.40px;line-height:24.40px;color:#353030;">Beaticare</div>
<div class="b" style="left:329px;top:1192px;width:2179px;height:2px;background:#f0f1f7;"></div>
<div class="b" style="left:351px;top:1136px;width:32px;height:32px;border:3px solid #dcdde6;box-sizing:border-box;border-radius:6px;background:#fff;"></div>
<svg class="b" style="left:426px;top:1136.50px;width:16px;height:30px" viewBox="0 0 16 30"><g fill="#2a2626"><circle cx="7.5" cy="6.2" r="3.05"/><circle cx="7.5" cy="15.2" r="3.05"/><circle cx="7.5" cy="24.1" r="3.05"/></g></svg>
<div class="t " style="left:484.50px;top:1140.77px;font-size:23.90px;line-height:23.90px;color:#0e73aa;">Grace Nelson</div>
<div class="t " style="left:731.60px;top:1140.35px;font-size:24.40px;line-height:24.40px;color:#353030;">1</div>
<div class="t " style="left:964.40px;top:1140.35px;font-size:24.40px;line-height:24.40px;color:#353030;">grac</div>
<div class="t " style="left:1181.28px;top:1140.35px;font-size:24.40px;line-height:24.40px;color:#353030;">illa.com</div>
<div class="b" style="left:1013.5px;top:1140px;width:169.20000000000005px;height:32px;background:#e3e3e3;"></div>
<div class="b" style="left:1021.5px;top:1146px;width:59.22000000000001px;height:18px;background:#d5d5d5;filter:blur(6px);border-radius:9px;"></div>
<div class="b" style="left:1089.64px;top:1146px;width:59.22000000000001px;height:18px;background:#d7d7d7;filter:blur(6px);border-radius:9px;"></div>
<div class="t " style="left:1345.80px;top:1140.21px;font-size:24.56px;line-height:24.56px;color:#353030;">October 28, 2025 6:10 pm</div>
<div class="b" style="left:1712px;top:1135px;width:92px;height:36px;background:#dcf2ec;border-radius:18px;"></div>
<div class="t " style="left:1726.50px;top:1141.46px;font-size:23.09px;line-height:23.09px;color:#17a384;-webkit-text-stroke:0.45px #17a384;">Active</div>
<div class="t " style="left:1968.00px;top:1140.35px;font-size:24.40px;line-height:24.40px;color:#353030;">1</div>
<div class="t " style="left:2201.00px;top:1139.81px;font-size:25.03px;line-height:25.03px;color:#353030;">$39.98</div>
<div class="t " style="left:2433.50px;top:1140.35px;font-size:24.40px;line-height:24.40px;color:#353030;">Cosmetics</div>
<div class="b" style="left:2448px;top:470px;width:112px;height:719px;background:linear-gradient(90deg,rgba(255,255,255,0.15) 0px,rgba(255,255,255,0.3) 20px,rgba(255,255,255,0.6) 45px,rgba(255,255,255,0.85) 65px,#fff 88px);"></div>
</body></html>
